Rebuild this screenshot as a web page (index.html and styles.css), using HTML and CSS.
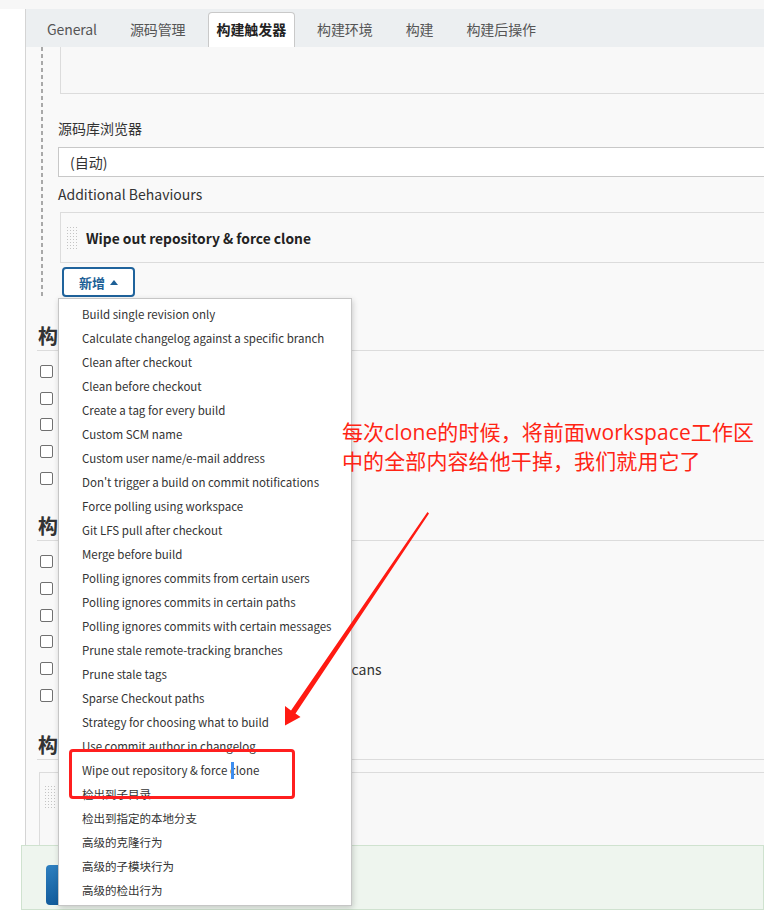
FILE: index.html
```html
<!DOCTYPE html>
<html lang="zh-CN">
<head>
<meta charset="utf-8">
<title>构建触发器</title>
<link rel="stylesheet" href="styles.css">
</head>
<body>
<div class="topstrip"></div>
<div class="layout">
  <div class="gutter"></div>
  <main class="main">
    <nav class="tabs">
      <span class="tab">General</span>
      <span class="tab">源码管理</span>
      <span class="tab active">构建触发器</span>
      <span class="tab">构建环境</span>
      <span class="tab">构建</span>
      <span class="tab">构建后操作</span>
    </nav>

    <div class="scm">
      <div class="prev-box"></div>
      <div class="field-label">源码库浏览器</div>
      <div class="select">(自动)</div>
      <div class="field-label ab">Additional Behaviours</div>
      <div class="behaviour"><span class="handle"></span><span class="behaviour-title">Wipe out repository &amp; force clone</span></div>
      <button class="add-btn">新增 <svg class="caret" width="8" height="5" viewBox="0 0 8 5"><path d="M0 5 L4 0 L8 5 Z" fill="#1c5f96"/></svg></button>
    </div>

    <section class="section s1">
      <h2 class="section-title">构建触发器</h2>
      <ul class="checks">
        <li><input type="checkbox"><span>触发远程构建 (例如,使用脚本)</span></li>
        <li><input type="checkbox"><span>其他工程构建后触发</span></li>
        <li><input type="checkbox"><span>定时构建</span></li>
        <li><input type="checkbox"><span>GitHub hook trigger for GITScm polling</span></li>
        <li><input type="checkbox"><span>轮询 SCM</span></li>
      </ul>
    </section>

    <section class="section s2">
      <h2 class="section-title">构建环境</h2>
      <ul class="checks">
        <li><input type="checkbox"><span>Delete workspace before build starts</span></li>
        <li><input type="checkbox"><span>Use secret text(s) or file(s)</span></li>
        <li><input type="checkbox"><span>Abort the build if it's stuck</span></li>
        <li><input type="checkbox"><span>Add timestamps to the Console Output</span></li>
        <li><input type="checkbox"><span>Inspect build log for published Gradle build scans</span></li>
        <li><input type="checkbox"><span>With Ant</span></li>
      </ul>
    </section>

    <section class="section s3">
      <h2 class="section-title">构建</h2>
      <div class="build-box"><span class="handle"></span><span class="build-title">Execute shell</span></div>
    </section>
  </main>
</div>

<div class="bottom-bar"><button class="save-btn">保存</button></div>

<div class="menu">
  <ul>
    <li>Build single revision only</li>
    <li>Calculate changelog against a specific branch</li>
    <li>Clean after checkout</li>
    <li>Clean before checkout</li>
    <li>Create a tag for every build</li>
    <li>Custom SCM name</li>
    <li>Custom user name/e-mail address</li>
    <li>Don't trigger a build on commit notifications</li>
    <li>Force polling using workspace</li>
    <li>Git LFS pull after checkout</li>
    <li>Merge before build</li>
    <li>Polling ignores commits from certain users</li>
    <li>Polling ignores commits in certain paths</li>
    <li>Polling ignores commits with certain messages</li>
    <li>Prune stale remote-tracking branches</li>
    <li>Prune stale tags</li>
    <li>Sparse Checkout paths</li>
    <li>Strategy for choosing what to build</li>
    <li>Use commit author in changelog</li>
    <li>Wipe out repository &amp; force clone</li>
    <li>检出到子目录</li>
    <li>检出到指定的本地分支</li>
    <li>高级的克隆行为</li>
    <li>高级的子模块行为</li>
    <li>高级的检出行为</li>
  </ul>
</div>

<div class="note">每次clone的时候，将前面workspace工作区<br>中的全部内容给他干掉，我们就用它了</div>
<div class="red-box"></div>
<div class="text-cursor"></div>
<svg class="arrow" width="764" height="910" viewBox="0 0 764 910">
  <polygon points="427.5,512 429,513.5 295.5,713.5 300.5,717 285,725.5 285,706 291,710.5" fill="#ff1a12"/>
</svg>
</body>
</html>
```
FILE: styles.css
```css
* { box-sizing: border-box; }
html, body { margin: 0; padding: 0; }
body {
  width: 764px;
  height: 910px;
  overflow: hidden;
  background: #ffffff;
  font-family: "Noto Sans CJK SC", "Noto Sans", sans-serif;
  color: #333;
  position: relative;
}
.topstrip { height: 9px; background: #f7f7f7; }
.layout { display: flex; height: 901px; }
.gutter { width: 25px; background: #fff; }
.main {
  flex: 1;
  background: #f9f9f9;
  border-left: 1px solid #d4d4d4;
}

/* tabs */
.tabs {
  height: 38px;
  background: #eceff1;
  display: flex;
  align-items: flex-end;
  padding-left: 10px;
  gap: 11px;
}
.tab {
  height: 35px;
  line-height: 35px;
  padding: 0 11px;
  font-size: 14px;
  color: #555;
  letter-spacing: -0.1px;
}
.tab.active {
  background: #fff;
  border: 1px solid #c9c9c9;
  border-bottom: none;
  border-radius: 4px 4px 0 0;
  line-height: 33px;
  color: #222;
  font-weight: 700;
  padding: 0 8px;
}

/* scm block */
.scm {
  margin-left: 15px;
  padding-left: 17px;
  background-image: linear-gradient(#a9a9a9 55%, transparent 55%);
  background-size: 2px 7px;
  background-repeat: repeat-y;
  background-position: 0 0;
}
.prev-box {
  height: 47px;
  margin-left: 2px;
  border-left: 1px solid #dcdcdc;
  border-bottom: 1px solid #dcdcdc;
  background: #f8f8f8;
}
.field-label {
  margin-top: 24px;
  line-height: 20px;
  font-size: 14px;
  color: #333;
}
.field-label.ab { margin-top: 7px; }
.select {
  margin-top: 9px;
  height: 30px;
  line-height: 28px;
  border: 1px solid #c8c8c8;
  border-right: none;
  background: #fff;
  padding-left: 11px;
  font-size: 14px;
  color: #333;
}
.behaviour {
  margin-top: 8px;
  margin-left: 2px;
  height: 51px;
  border: 1px solid #dcdcdc;
  border-right: none;
  display: flex;
  align-items: center;
  padding-left: 5px;
  gap: 8px;
}
.handle {
  display: block;
  width: 12px;
  height: 24px;
  background-image: radial-gradient(circle, #c4c4c4 0.8px, transparent 1px);
  background-size: 3px 3px;
}
.behaviour-title {
  font-size: 13.8px;
  font-weight: 700;
  color: #222;
}
.add-btn {
  margin-top: 4px;
  margin-left: 4px;
  width: 73px;
  height: 30px;
  border: 2px solid #1f639c;
  border-radius: 4px;
  background: #fff;
  color: #1c5f96;
  font-family: inherit;
  font-size: 13px;
  font-weight: 700;
  display: flex;
  align-items: center;
  justify-content: center;
  gap: 5px;
  padding: 0;
}
.caret { display: block; }

/* sections */
.section { margin-left: 11px; }
.section-title {
  margin: 0;
  height: 29px;
  line-height: 28px;
  font-size: 20px;
  font-weight: 700;
  color: #333;
  border-bottom: 1px solid #dcdcdc;
  padding-left: 1px;
}
.s1 { margin-top: 25px; }
.s2 { margin-top: 21px; }
.s3 { margin-top: 22px; }
.checks {
  list-style: none;
  margin: 7px 0 0;
  padding: 0 0 0 3px;
}
.checks li {
  height: 26.7px;
  display: flex;
  align-items: center;
  gap: 8px;
  font-size: 14px;
  color: #333;
}
.checks input {
  -webkit-appearance: none;
  appearance: none;
  margin: 0;
  width: 13px;
  height: 13px;
  border: 1px solid #707070;
  border-radius: 2px;
  background: #fff;
}
.build-box {
  margin-top: 12px;
  margin-left: 2px;
  height: 140px;
  border: 1px solid #dcdcdc;
  border-right: none;
  background: #f8f8f8;
  display: flex;
  align-items: flex-start;
  padding: 12px 0 0 4px;
  gap: 10px;
}
.build-title { font-size: 14px; font-weight: 700; color: #222; line-height: 24px; }

/* floating bottom bar */
.bottom-bar {
  position: absolute;
  left: 21px;
  right: 0;
  top: 845px;
  bottom: 0;
  background: #eef5ee;
  border: 1px solid #cfe2cf;
  padding: 19px 0 0 24px;
}
.save-btn {
  width: 70px;
  height: 40px;
  border: none;
  border-radius: 4px;
  background: linear-gradient(#2d7fbf, #125c9c);
  color: #fff;
  font-family: inherit;
  font-size: 14px;
}

/* dropdown menu */
.menu {
  position: absolute;
  left: 58px;
  top: 298px;
  width: 294px;
  height: 608px;
  background: #fff;
  border: 1px solid #c6c6c6;
  box-shadow: 1px 2px 6px rgba(0, 0, 0, 0.18);
  padding: 3px 0;
}
.menu ul { list-style: none; margin: 0; padding: 0; }
.menu li {
  height: 24px;
  line-height: 24px;
  padding-left: 23px;
  font-size: 11.5px;
  color: #333;
  white-space: nowrap;
}

/* annotations */
.note {
  position: absolute;
  left: 342px;
  top: 418px;
  font-family: "Open Sans", "Noto Sans CJK SC", sans-serif;
  font-size: 21px;
  line-height: 29px;
  color: #ff2414;
  white-space: nowrap;
  letter-spacing: 0.1px;
}
.red-box {
  position: absolute;
  left: 69px;
  top: 749px;
  width: 226px;
  height: 50px;
  border: 3px solid #ff1f1f;
  border-radius: 4px;
}
.text-cursor {
  position: absolute;
  left: 231px;
  top: 762px;
  width: 3px;
  height: 17px;
  background: #3d8ef0;
}
.arrow {
  position: absolute;
  left: 0;
  top: 0;
  pointer-events: none;
}
```
